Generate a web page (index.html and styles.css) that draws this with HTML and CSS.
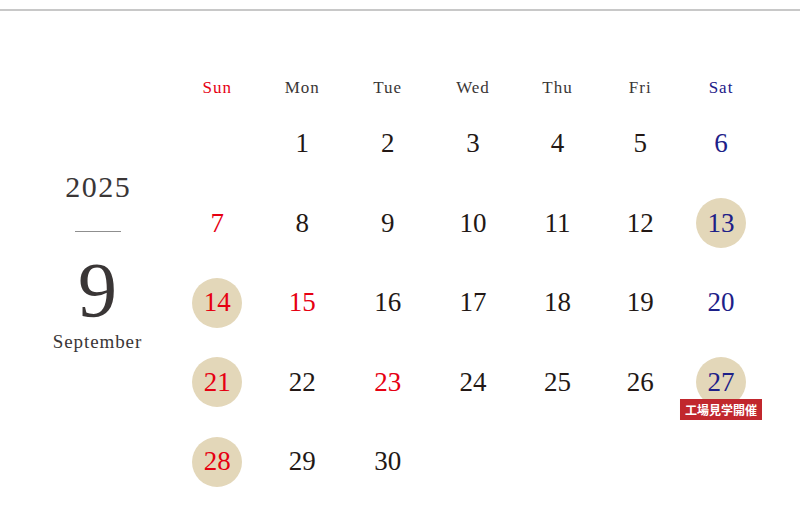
FILE: index.html
```html
<!DOCTYPE html>
<html lang="ja">
<head>
<meta charset="utf-8">
<link rel="stylesheet" href="styles.css">
</head>
<body>
<div class="topline"></div>
<main class="cal">
  <section class="month">
    <div class="year">2025</div>
    <div class="rule"></div>
    <div class="num">9</div>
    <div class="name">September</div>
  </section>
  <section class="grid">
    <div class="dow sun">Sun</div>
    <div class="dow">Mon</div>
    <div class="dow">Tue</div>
    <div class="dow">Wed</div>
    <div class="dow">Thu</div>
    <div class="dow">Fri</div>
    <div class="dow sat">Sat</div>

    <div class="day"></div>
    <div class="day"><span>1</span></div>
    <div class="day"><span>2</span></div>
    <div class="day"><span>3</span></div>
    <div class="day"><span>4</span></div>
    <div class="day"><span>5</span></div>
    <div class="day sat"><span>6</span></div>

    <div class="day sun"><span>7</span></div>
    <div class="day"><span>8</span></div>
    <div class="day"><span>9</span></div>
    <div class="day"><span>10</span></div>
    <div class="day"><span>11</span></div>
    <div class="day"><span>12</span></div>
    <div class="day sat off"><span>13</span></div>

    <div class="day sun off"><span>14</span></div>
    <div class="day sun"><span>15</span></div>
    <div class="day"><span>16</span></div>
    <div class="day"><span>17</span></div>
    <div class="day"><span>18</span></div>
    <div class="day"><span>19</span></div>
    <div class="day sat"><span>20</span></div>

    <div class="day sun off"><span>21</span></div>
    <div class="day"><span>22</span></div>
    <div class="day sun"><span>23</span></div>
    <div class="day"><span>24</span></div>
    <div class="day"><span>25</span></div>
    <div class="day"><span>26</span></div>
    <div class="day sat off"><span>27</span><em class="badge">工場見学開催</em></div>

    <div class="day sun off"><span>28</span></div>
    <div class="day"><span>29</span></div>
    <div class="day"><span>30</span></div>
    <div class="day"></div>
    <div class="day"></div>
    <div class="day"></div>
    <div class="day"></div>
  </section>
</main>
</body>
</html>
```
FILE: styles.css
```css
html, body {
  margin: 0;
  padding: 0;
  background: #fff;
}
body {
  font-family: "Liberation Serif", "Times New Roman", serif;
  color: #333;
}
.topline {
  margin-top: 9px;
  height: 2px;
  background: #c8c8c8;
}
.cal {
  display: flex;
  align-items: flex-start;
}
.month {
  width: 155px;
  padding-left: 20px;
  padding-top: 161px;
  display: flex;
  flex-direction: column;
  align-items: center;
  color: #3a3636;
}
.year {
  font-size: 30px;
  line-height: 30px;
  letter-spacing: 1.5px;
  margin-left: 1.5px;
}
.rule {
  margin-top: 29px;
  width: 46px;
  height: 1px;
  background: #8f8f8f;
}
.num {
  margin-top: 19px;
  font-size: 78px;
  line-height: 78px;
}
.name {
  margin-top: 4px;
  font-size: 19px;
  line-height: 18px;
  letter-spacing: 0.9px;
}
.grid {
  display: grid;
  grid-template-columns: 84.5px 85.5px 85.5px 85px 84px 81.5px 80px;
  grid-template-rows: 33px repeat(5, 79.5px);
  margin-top: 60px;
}
.dow {
  display: flex;
  align-items: center;
  justify-content: center;
  font-size: 17px;
  letter-spacing: 1px;
  color: #3a3636;
}
.day {
  position: relative;
  display: flex;
  align-items: center;
  justify-content: center;
  font-size: 27px;
  color: #231815;
}
.day span {
  width: 50px;
  height: 50px;
  border-radius: 50%;
  display: flex;
  align-items: center;
  justify-content: center;
}
.sun, .sun span { color: #e60012; }
.sat, .sat span { color: #1d2088; }
.off span { background: #e3d7b9; }
.badge {
  position: absolute;
  top: 56px;
  left: 50%;
  transform: translateX(-50%);
  height: 21px;
  padding: 0 5px;
  background: #c1272d;
  color: #fff;
  font-style: normal;
  font-family: "Noto Sans CJK JP", "Noto Sans", sans-serif;
  font-weight: 700;
  font-size: 12px;
  line-height: 21px;
  white-space: nowrap;
}
```
